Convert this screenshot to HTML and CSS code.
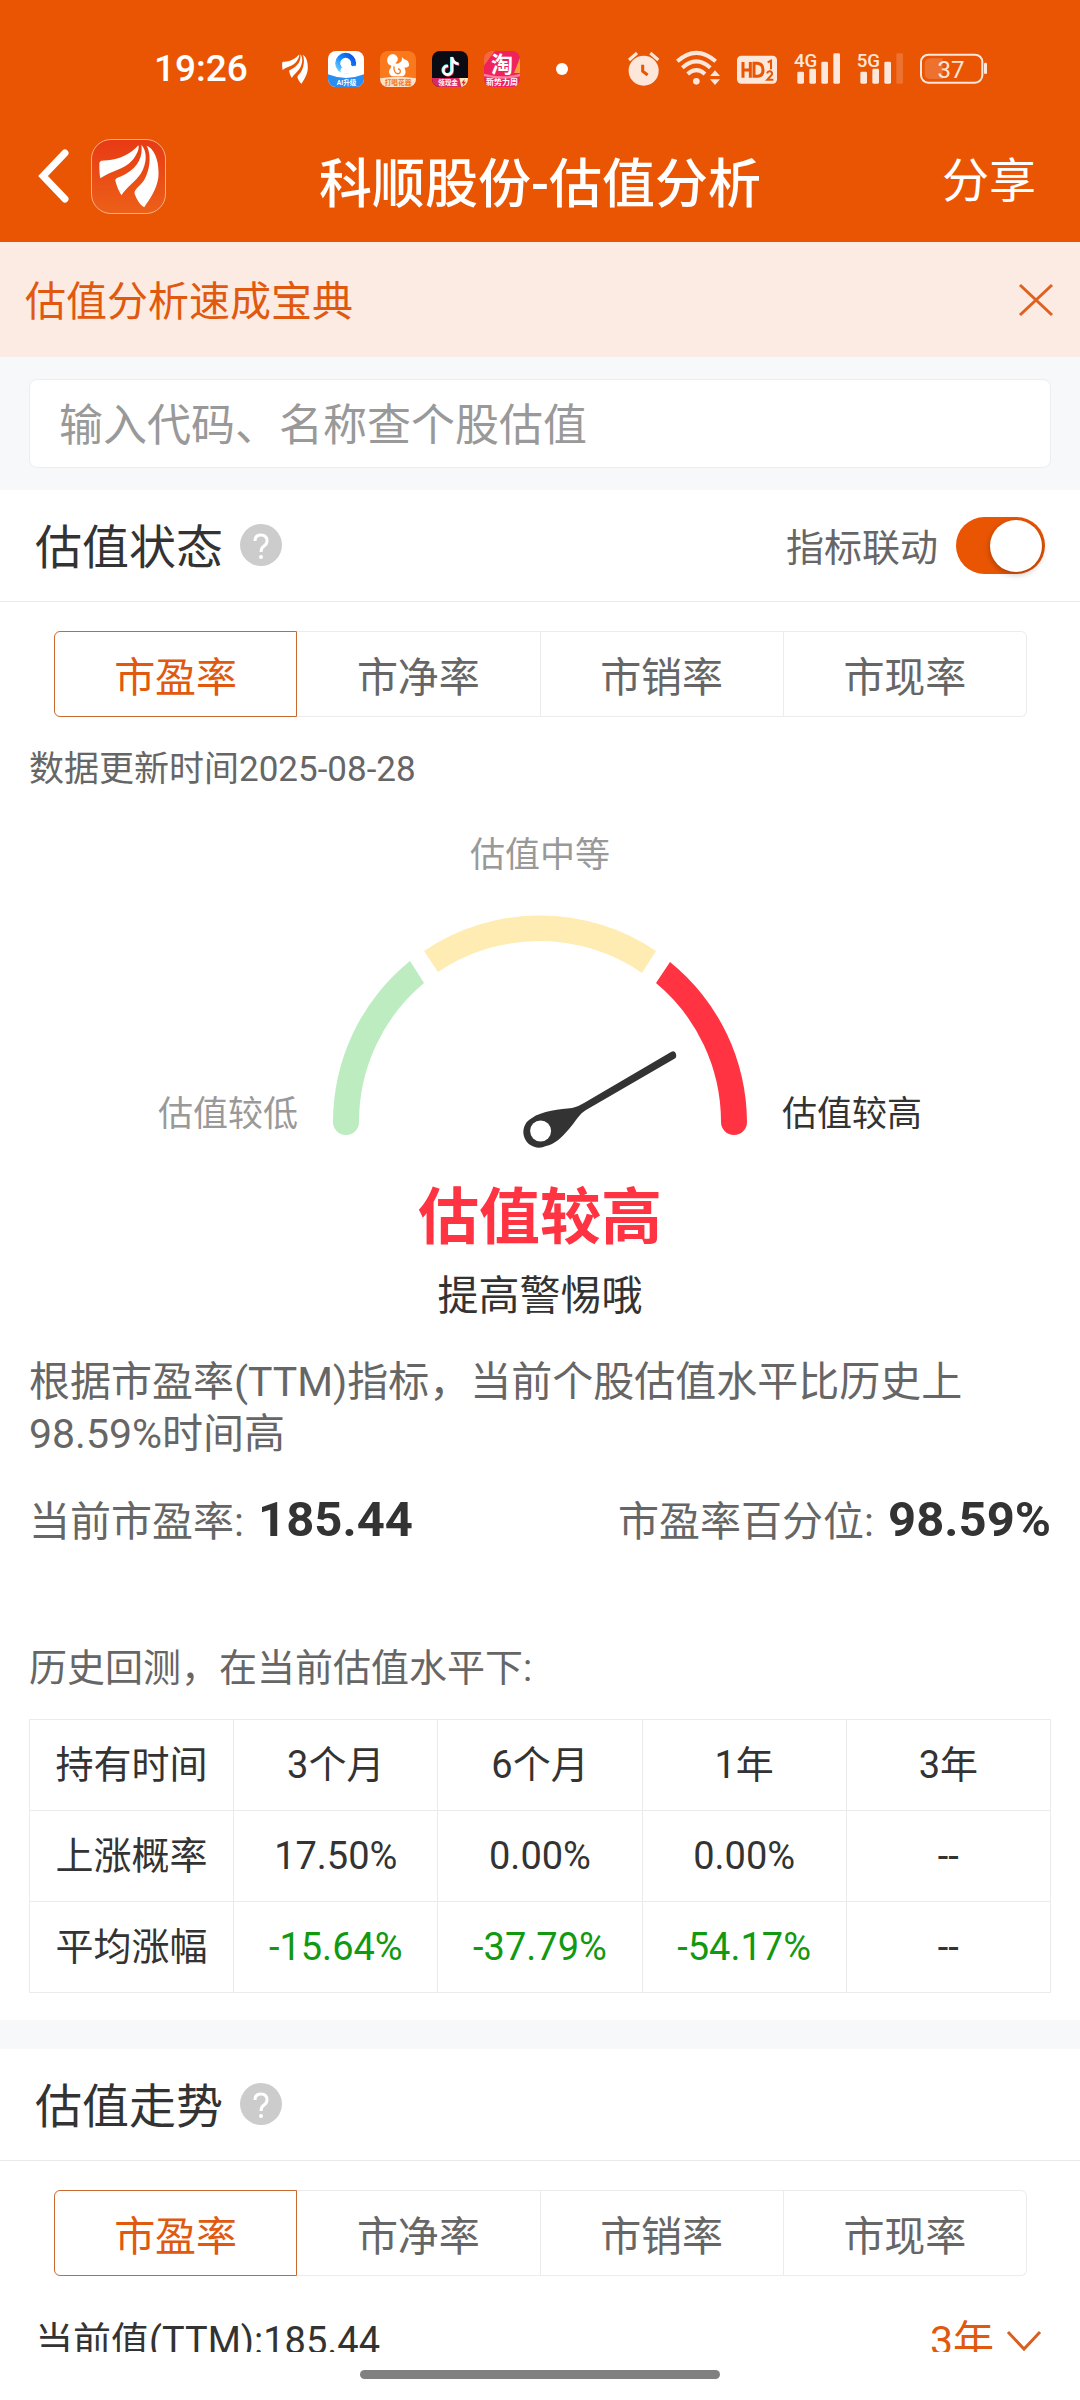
FILE: index.html
```html
<!DOCTYPE html>
<html lang="zh-CN">
<head>
    <meta charset="UTF-8">
    <meta name="viewport" content="width=device-width, initial-scale=1.0">
    <title>科顺股份-估值分析</title>
    <link rel="stylesheet" href="styles.css">
</head>
<body>
    <svg class="defs" aria-hidden="true">
        <symbol id="wing" viewBox="284 98 174 194" preserveAspectRatio="none">
            <path d="M285 158C285 150 291 148 300 148C345 147 380 125 398 102C402 108 396 130 380 148C355 177 320 178 288 202C285 190 285 170 285 158Z"/>
            <path d="M407 100C424 120 424 155 405 188C390 211 365 228 349 253C341 240 335 225 331 208C335 198 345 200 360 190C400 165 411 135 407 100Z"/>
            <path d="M422 103C445 112 460 150 456 200C450 240 430 265 415 290C400 280 392 262 387 248C387 235 400 228 412 212C432 180 437 130 422 103Z"/>
        </symbol>
    </svg>

    <div class="phone">
        <header class="top">
            <div class="statusbar">
                <div class="status-left">
                    <span class="clock">19:26</span>
                    <svg class="wing-small" width="26" height="30"><use href="#wing" width="26" height="30"/></svg>
                    <svg width="36" height="36" viewBox="0 0 108 108">
                        <defs>
                            <clipPath id="round"><rect width="108" height="108" rx="24"/></clipPath>
                            <linearGradient id="ring" x1="0" y1="1" x2="1" y2="0"><stop offset="0" stop-color="#6fd0ff"/><stop offset="0.5" stop-color="#1788ff"/><stop offset="1" stop-color="#0a50e0"/></linearGradient>
                        </defs>
                        <g clip-path="url(#round)">
                            <rect width="108" height="108" fill="#fff"/>
                            <circle cx="53" cy="37" r="24" fill="none" stroke="url(#ring)" stroke-width="15"/>
                            <path d="M42 68a11 11 0 0 1 4-20a15 15 0 0 1 27-2a12 12 0 0 1 10 22z" fill="#fff"/>
                            <path d="M0 70Q54 92 108 70V108H0Z" fill="#2c8df0"/>
                            <text x="56" y="101" class="app-tag">AI升级</text>
                        </g>
                    </svg>
                    <svg width="36" height="36" viewBox="0 0 108 108">
                        <g clip-path="url(#round)">
                            <rect width="108" height="108" fill="#f9791c"/>
                            <path d="M22 24C24 10 40 6 49 14C57 22 53 32 46 36C52 42 60 34 65 30L66 18L72 25C82 26 88 34 87 44C84 50 77 49 73 50C79 62 78 72 68 76H36C26 70 24 60 32 52L34 44C25 42 20 34 22 24Z" fill="#fff"/>
                            <path d="M42 46C40 58 46 70 56 68C64 64 62 54 54 54" fill="none" stroke="#f9791c" stroke-width="4"/>
                            <path d="M0 82Q54 72 108 82V108H0Z" fill="#fde3c9"/>
                            <text x="54" y="101" class="app-tag tag-orange">打唱花器</text>
                        </g>
                    </svg>
                    <svg width="36" height="36" viewBox="0 0 108 108">
                        <g clip-path="url(#round)">
                            <rect width="108" height="108" fill="#0b0b14"/>
                            <g fill="none" stroke-width="8">
                                <path d="M46 44a13 13 0 1 0 12 14V18c2 12 9 19 20 20" stroke="#25f4ee"/>
                                <path d="M50 47a13 13 0 1 0 12 14V21c2 12 9 19 20 20" stroke="#fe2c55"/>
                                <path d="M48 45a13 13 0 1 0 12 14V19c2 12 9 19 20 20" stroke="#fff"/>
                            </g>
                            <path d="M0 81H108V108H0Z" fill="#d92a63"/>
                            <path d="M82 81H108V108H88Z" fill="#ffe9b8"/>
                            <path d="M98 84L88 97H94L92 106L102 92H96Z" fill="#d92a2f"/>
                            <text x="48" y="101" class="app-tag">领现金</text>
                        </g>
                    </svg>
                    <svg width="36" height="36" viewBox="0 0 108 108">
                        <g clip-path="url(#round)">
                            <rect width="108" height="108" fill="#f0225c"/>
                            <path d="M0 0H32L0 44Z" fill="#f7673d"/>
                            <path d="M108 20V66H90Z" fill="#f79a3d"/>
                            <path d="M0 68Q60 84 108 68V76Q60 90 0 76Z" fill="#ff7d9f"/>
                            <text x="54" y="64" class="app-glyph">淘</text>
                            <text x="54" y="103" class="app-tag tag-big">新势力周</text>
                        </g>
                    </svg>
                    <span class="dot"></span>
                </div>
                <div class="status-right">
                    <svg width="31" height="36" viewBox="148 64 93 108">
                        <circle cx="195" cy="123" r="45"/>
                        <path d="M151 91L175 70M239 91L215 70" class="line" stroke-width="9"/>
                        <path d="M192 105V125L207 136" fill="none" stroke="#ea5504" stroke-width="9"/>
                    </svg>
                    <svg width="44" height="36" viewBox="291 64 132 108">
                        <path d="M295 95Q352 44 410 95M310 114Q352 76 394 114M326 133Q352 110 378 133" class="line" stroke-width="12"/>
                        <circle cx="352" cy="155" r="10"/>
                        <path d="M393 139L408 122L423 139ZM393 149H423L408 166Z"/>
                    </svg>
                    <svg width="40" height="36" viewBox="468 64 120 108">
                        <rect x="468" y="78" width="120" height="84" rx="13"/>
                        <g fill="none" stroke="#ea5504">
                            <path d="M486 97V144M508 97V144M486 121H508M519 101V140H528Q546 140 546 121T528 101Z" stroke-width="9"/>
                            <path d="M560 98L570 93V119M558 131Q561 124 567 125Q576 127 572 136L559 150H577" stroke-width="6"/>
                        </g>
                    </svg>
                    <svg width="46" height="36" viewBox="645 64 138 108">
                        <rect x="655" y="126" width="20" height="36" rx="4"/>
                        <rect x="691" y="117" width="20" height="45" rx="4"/>
                        <rect x="727" y="96" width="20" height="66" rx="4"/>
                        <rect x="763" y="71" width="20" height="91" rx="4"/>
                        <text x="645" y="111" class="net">4G</text>
                    </svg>
                    <svg width="46" height="36" viewBox="834 64 138 108">
                        <rect x="844" y="126" width="20" height="36" rx="4"/>
                        <rect x="880" y="117" width="20" height="45" rx="4"/>
                        <rect x="916" y="96" width="20" height="66" rx="4"/>
                        <rect x="952" y="71" width="20" height="91" rx="4" opacity="0.2"/>
                        <text x="833" y="111" class="net">5G</text>
                    </svg>
                    <svg width="67" height="36" viewBox="1020 64 201 108">
                        <rect x="1023" y="75" width="184" height="84" rx="22" class="line" stroke-width="6"/>
                        <path d="M1052 86H1088V148H1052Q1034 148 1034 130V104Q1034 86 1052 86Z" opacity="0.2"/>
                        <rect x="1212" y="99" width="9" height="34" rx="4"/>
                        <text x="1113" y="144" class="battery">37</text>
                    </svg>
                </div>
            </div>
            <nav class="navbar">
                <div class="nav-left">
                    <button class="back" aria-label="返回">
                        <svg width="32" height="54" viewBox="0 0 32 54"><path d="M27 4L5 27L27 50" fill="none" stroke="#fff" stroke-width="7" stroke-linecap="round"/></svg>
                    </button>
                    <a href="#" class="logo" aria-label="首页">
                        <svg width="60" height="64"><use href="#wing" width="60" height="64"/></svg>
                    </a>
                </div>
                <h1>科顺股份-估值分析</h1>
                <button class="share">分享</button>
            </nav>
        </header>

        <main class="content">
            <div class="banner">
                <a href="#">估值分析速成宝典</a>
                <button class="close" aria-label="关闭">
                    <svg width="34" height="32" viewBox="0 0 34 32"><path d="M1 1L33 31M33 1L1 31" stroke="#e0601f" stroke-width="3"/></svg>
                </button>
            </div>

            <div class="search">
                <input type="text" aria-label="查个股估值" placeholder="输入代码、名称查个股估值">
            </div>

            <section class="card">
                <div class="card-head">
                    <h2>估值状态</h2>
                    <button class="help" aria-label="说明">
                        <svg width="43" height="43" viewBox="0 0 43 43"><circle cx="21" cy="21" r="21" fill="#ccc"/><path d="M15 17Q15 11 21 11T27 17Q27 20 24 22T21 28" fill="none" stroke="#fff" stroke-width="3"/><circle cx="21" cy="33" r="2" fill="#fff"/></svg>
                    </button>
                    <label class="link-label" for="link">指标联动</label>
                    <input type="checkbox" id="link" class="switch" checked>
                </div>
                <div class="tabs">
                    <button class="active">市盈率</button>
                    <button>市净率</button>
                    <button>市销率</button>
                    <button>市现率</button>
                </div>
                <div class="card-body">
                    <p class="date">数据更新时间2025-08-28</p>

                    <div class="gauge">
                        <span class="mid">估值中等</span>
                        <span class="low">估值较低</span>
                        <svg width="414" height="232" viewBox="333 915 414 232">
                            <path d="M333 1122A207 207 0 0 1 410 961L424 983A181 181 0 0 0 359 1122A13 13 0 0 1 333 1122Z" fill="#bcecc0"/>
                            <path d="M424 951A207 207 0 0 1 656 951L642 973A181 181 0 0 0 438 972Z" fill="#ffecb3"/>
                            <path d="M747 1122A207 207 0 0 0 670 962L656 983A181 181 0 0 1 721 1122A13 13 0 0 0 747 1122Z" fill="#ff3341"/>
                            <path d="M671 1052Q675 1050 676 1054T674 1059L586 1110C579 1114 576 1121 569 1129C562 1137 554 1145 546 1146A15.500 15.500 0 0 1 532 1118C541 1111 561 1109 572 1108C577 1107 580 1105 584 1103Z" fill="#333"/>
                            <circle cx="540.600" cy="1131" r="10.500" fill="#fff"/>
                        </svg>
                        <span class="high">估值较高</span>
                    </div>

                    <p class="verdict">估值较高</p>
                    <p class="hint">提高警惕哦</p>
                    <p class="summary">根据市盈率(TTM)指标，当前个股估值水平比历史上98.59%时间高</p>

                    <div class="stats">
                        <span>当前市盈率: <strong>185.44</strong></span>
                        <span>市盈率百分位: <strong>98.59%</strong></span>
                    </div>

                    <p class="history">历史回测，在当前估值水平下:</p>
                    <table>
                        <thead>
                            <tr><th>持有时间</th><th>3个月</th><th>6个月</th><th>1年</th><th>3年</th></tr>
                        </thead>
                        <tbody>
                            <tr><th>上涨概率</th><td>17.50%</td><td>0.00%</td><td>0.00%</td><td>--</td></tr>
                            <tr><th>平均涨幅</th><td class="down">-15.64%</td><td class="down">-37.79%</td><td class="down">-54.17%</td><td>--</td></tr>
                        </tbody>
                    </table>
                </div>
            </section>

            <section class="card">
                <div class="card-head">
                    <h2>估值走势</h2>
                    <button class="help" aria-label="说明">
                        <svg width="43" height="43" viewBox="0 0 43 43"><circle cx="21" cy="21" r="21" fill="#ccc"/><path d="M15 17Q15 11 21 11T27 17Q27 20 24 22T21 28" fill="none" stroke="#fff" stroke-width="3"/><circle cx="21" cy="33" r="2" fill="#fff"/></svg>
                    </button>
                </div>
                <div class="tabs">
                    <button class="active">市盈率</button>
                    <button>市净率</button>
                    <button>市销率</button>
                    <button>市现率</button>
                </div>
                <div class="trend">
                    <span>当前值(TTM):185.44</span>
                    <div class="range">
                        <select aria-label="时间范围">
                            <option>3年</option>
                        </select>
                        <svg width="34" height="20" viewBox="0 0 34 20"><path d="M1 1L17 18L33 1" fill="none" stroke="#d95f1e" stroke-width="3"/></svg>
                    </div>
                </div>
            </section>
        </main>

        <footer class="home"><span></span></footer>
    </div>
</body>
</html>
```
FILE: styles.css
```css
* {
    margin: 0;
    padding: 0;
    box-sizing: border-box;
}

body {
    background: #fff;
    color: #333;
    font-family: Roboto, 'Noto Sans CJK SC', sans-serif;
    font-size: 38px;
    line-height: 52px;
}

button, input, select {
    font-family: inherit;
    background: none;
    border: none;
}

button {
    cursor: pointer;
}

a {
    color: inherit;
    text-decoration: none;
}

svg {
    display: block;
    flex-shrink: 0;
    overflow: visible;
}

.defs {
    position: absolute;
    width: 0;
    height: 0;
}

.phone {
    height: 100vh;
    display: flex;
    flex-direction: column;
}

/* status bar + nav */
.top {
    background: #ea5504;
    color: #fff;
    flex-shrink: 0;
}

.statusbar {
    height: 138px;
    display: flex;
    justify-content: space-between;
    align-items: center;
    padding: 0 93px 0 154px;
}

.status-left, .status-right {
    display: flex;
    align-items: center;
    gap: 16px;
}

.status-right {
    gap: 17px;
    fill: #fde6da;
}

.status-right .line {
    fill: none;
    stroke: #fde6da;
}

.clock {
    font-size: 37px;
    font-weight: 500;
    margin-right: 18px;
}

.wing-small {
    fill: #fff;
    margin-right: 4px;
}

.dot {
    width: 12px;
    height: 12px;
    margin-left: 20px;
    border-radius: 50%;
    background: #fff;
}

.app-tag {
    font-size: 20px;
    font-weight: 700;
    text-anchor: middle;
    fill: #fff;
}

.tag-orange {
    fill: #f07a26;
}

.tag-big {
    font-size: 24px;
}

.app-glyph {
    font-size: 66px;
    font-weight: 700;
    text-anchor: middle;
    fill: #fff;
}

.net {
    font-size: 56px;
    font-weight: 500;
}

.battery {
    font-size: 72px;
    text-anchor: middle;
}

.navbar {
    height: 104px;
    display: grid;
    grid-template-columns: 1fr auto 1fr;
    align-items: center;
    padding: 0 44px 28px 38px;
}

.nav-left {
    display: flex;
    align-items: center;
    gap: 21px;
}

.logo {
    width: 75px;
    height: 75px;
    display: flex;
    justify-content: center;
    align-items: center;
    border: 1px solid #f7b08a;
    border-radius: 20px;
    background: linear-gradient(#e83a14, #ec6018);
    fill: #fff;
}

.navbar h1 {
    font-size: 53px;
    font-weight: 500;
    padding: 18px 0 0 6px;
}

.share {
    justify-self: end;
    color: #fff;
    font-size: 47px;
}

/* content */
.content {
    flex: 1;
    min-height: 0;
    overflow: hidden;
    background: #f6f8fa;
}

.banner {
    height: 115px;
    display: flex;
    justify-content: space-between;
    align-items: center;
    padding: 0 27px 0 25px;
    background: #fcebe2;
    color: #e0590f;
    font-size: 41px;
}

.banner a {
    padding-top: 5px;
}

.search {
    padding: 22px 29px;
}

.search input {
    width: 100%;
    height: 89px;
    display: block;
    padding: 4px 29px 0;
    border: 1px solid #ebedef;
    border-radius: 8px;
    background: #fff;
    font-size: 44px;
}

.search input::placeholder {
    color: #999;
}

.card {
    background: #fff;
    margin-bottom: 29px;
}

.card-head {
    height: 112px;
    display: flex;
    align-items: center;
    padding: 0 35px;
    border-bottom: 1px solid #eaeaea;
}

.card-head h2 {
    font-size: 47px;
    font-weight: 400;
    padding-top: 4px;
}

.help {
    margin-left: 17px;
}

.link-label {
    margin-left: auto;
    padding-top: 4px;
    color: #666;
}

.switch {
    appearance: none;
    width: 89px;
    height: 57px;
    margin-left: 18px;
    padding: 3px;
    border-radius: 29px;
    background: #ccc;
    display: flex;
}

.switch::before {
    content: '';
    width: 52px;
    height: 52px;
    border-radius: 50%;
    background: #fff;
    box-shadow: 0 2px 6px rgba(0, 0, 0, 0.3);
}

.switch:checked {
    background: #ea5504;
    justify-content: flex-end;
}

.tabs {
    display: flex;
    margin: 29px 53px 0 54px;
}

.tabs button {
    width: 25%;
    height: 86px;
    border: 1px solid #ececec;
    border-left-width: 0;
    color: #666;
    font-size: 41px;
}

.tabs button:first-child {
    border-radius: 6px 0 0 6px;
}

.tabs button:last-child {
    border-radius: 0 6px 6px 0;
}

.tabs .active {
    border: 1px solid #c8692f;
    color: #e0590f;
}

.card-body {
    padding: 27px 29px;
}

.date {
    color: #666;
    font-size: 35px;
}

.gauge {
    display: grid;
    grid-template-columns: 1fr auto 1fr;
    column-gap: 35px;
    row-gap: 33px;
    align-items: end;
    margin-top: 34px;
    color: #999;
    font-size: 35px;
}

.mid {
    grid-column: 1 / -1;
    text-align: center;
}

.low, .high {
    padding-bottom: 6px;
}

.low {
    text-align: right;
}

.high {
    color: #333;
}

.verdict {
    margin-top: 31px;
    text-align: center;
    color: #ff3341;
    font-size: 61px;
    font-weight: 700;
    line-height: 80px;
}

.hint {
    margin-top: 12px;
    text-align: center;
    font-size: 41px;
}

.summary {
    margin-top: 34px;
    color: #666;
    font-size: 41px;
}

.stats {
    display: flex;
    justify-content: space-between;
    margin-top: 34px;
    color: #666;
    font-size: 41px;
}

.stats strong {
    margin-left: 4px;
    color: #333;
    font-size: 49px;
}

.history {
    margin-top: 94px;
    color: #666;
}

table {
    width: 100%;
    margin-top: 25px;
    border-collapse: collapse;
    table-layout: fixed;
    text-align: center;
}

th, td {
    height: 91px;
    border: 1px solid #ebebeb;
    font-weight: 400;
}

.down {
    color: #119911;
}

.trend {
    display: flex;
    justify-content: space-between;
    align-items: center;
    margin-top: 39px;
    padding: 0 39px 0 35px;
}

.range {
    display: flex;
    align-items: center;
    gap: 12px;
}

.range select {
    appearance: none;
    color: #e0590f;
    font-size: 41px;
    line-height: 52px;
}

/* home indicator */
.home {
    height: 48px;
    flex-shrink: 0;
    display: flex;
    justify-content: center;
    padding-top: 18px;
}

.home span {
    width: calc(100% / 3);
    height: 9px;
    border-radius: 5px;
    background: #808080;
}
```
